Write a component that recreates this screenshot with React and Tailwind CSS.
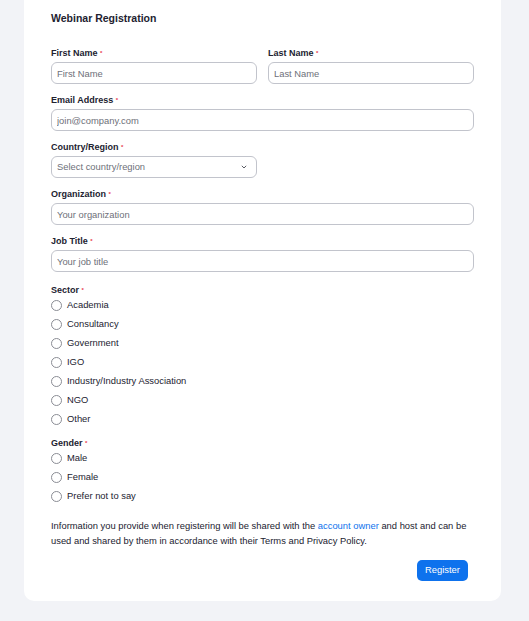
import React, { useState } from "react";

const sectors = [
  "Academia",
  "Consultancy",
  "Government",
  "IGO",
  "Industry/Industry Association",
  "NGO",
  "Other",
];

const genders = ["Male", "Female", "Prefer not to say"];

const Label = ({ children, className = "" }) => (
  <div className={"leading-[12px] text-[9px] font-bold text-[#222230] " + className}>
    {children} <span className="text-[6px] align-top text-[#e8374b]">*</span>
  </div>
);

const TextInput = ({ placeholder }) => (
  <input
    type="text"
    placeholder={placeholder}
    className="block w-full h-[22px] px-[5px] text-[9.4px] text-[#222230] placeholder:text-[#6e7079] border border-[#c2c4cc] rounded-[6px] outline-none bg-white"
  />
);

const Radio = ({ name, label, value, onChange }) => (
  <label className="flex items-center h-[19px] cursor-pointer">
    <span className="w-[11px] h-[11px] rounded-full border border-[#8a8c94] bg-white flex items-center justify-center">
      {value === label && <span className="w-[5px] h-[5px] rounded-full bg-[#0e72ed]" />}
    </span>
    <input
      type="radio"
      name={name}
      className="hidden"
      checked={value === label}
      onChange={() => onChange(label)}
    />
    <span className="ml-[5px] text-[9.4px] text-[#222230]">{label}</span>
  </label>
);

const App = () => {
  const [sector, setSector] = useState("");
  const [gender, setGender] = useState("");

  return (
    <div
      className="min-h-[621px] bg-[#f2f3f7] pb-[20px]"
      style={{ fontFamily: '"Liberation Sans", Arial, sans-serif' }}
    >
      <div className="ml-[24px] w-[477px] bg-white rounded-b-[10px] px-[27px] pt-[11px] pb-[20px]">
        <h1 className="h-[14px] leading-[14px] text-[10.5px] font-bold text-[#222230] mb-[22px]">
          Webinar Registration
        </h1>

        {/* Names */}
        <div className="grid grid-cols-2 gap-x-[11px] mb-[10px]">
          <div>
            <Label className="mb-[3px]">First Name</Label>
            <TextInput placeholder="First Name" />
          </div>
          <div>
            <Label className="mb-[3px]">Last Name</Label>
            <TextInput placeholder="Last Name" />
          </div>
        </div>

        <div className="mb-[10px]">
          <Label className="mb-[3px]">Email Address</Label>
          <TextInput placeholder="join@company.com" />
        </div>

        <div className="mb-[10px]">
          <Label className="mb-[3px]">Country/Region</Label>
          <div className="w-[206px] h-[22px] px-[5px] flex items-center justify-between border border-[#c2c4cc] rounded-[6px] text-[9.4px] text-[#6e7079]">
            <span>Select country/region</span>
            <svg width="6" height="4" viewBox="0 0 6 4" className="mr-[4px]">
              <path d="M0.8 0.8 L3 3 L5.2 0.8" fill="none" stroke="#5a5c64" strokeWidth="1" />
            </svg>
          </div>
        </div>

        <div className="mb-[10px]">
          <Label className="mb-[3px]">Organization</Label>
          <TextInput placeholder="Your organization" />
        </div>

        <div className="mb-[12px]">
          <Label className="mb-[3px]">Job Title</Label>
          <TextInput placeholder="Your job title" />
        </div>

        <div className="mb-[8px]">
          <Label>Sector</Label>
          {sectors.map((s) => (
            <Radio key={s} name="sector" label={s} value={sector} onChange={setSector} />
          ))}
        </div>

        <div className="mb-[12px]">
          <Label>Gender</Label>
          {genders.map((g) => (
            <Radio key={g} name="gender" label={g} value={gender} onChange={setGender} />
          ))}
        </div>

        <p className="text-[9.4px] leading-[15px] text-[#222230] mb-[12px]">
          Information you provide when registering will be shared with the{" "}
          <span className="text-[#0e72ed]">account owner</span> and host and can be used and
          shared by them in accordance with their Terms and Privacy Policy.
        </p>

        <div className="flex justify-end pr-[6px]">
          <button className="w-[51px] h-[21px] rounded-[5px] bg-[#0e72ed] text-white text-[9.4px]">
            Register
          </button>
        </div>
      </div>
    </div>
  );
};

export default App;
